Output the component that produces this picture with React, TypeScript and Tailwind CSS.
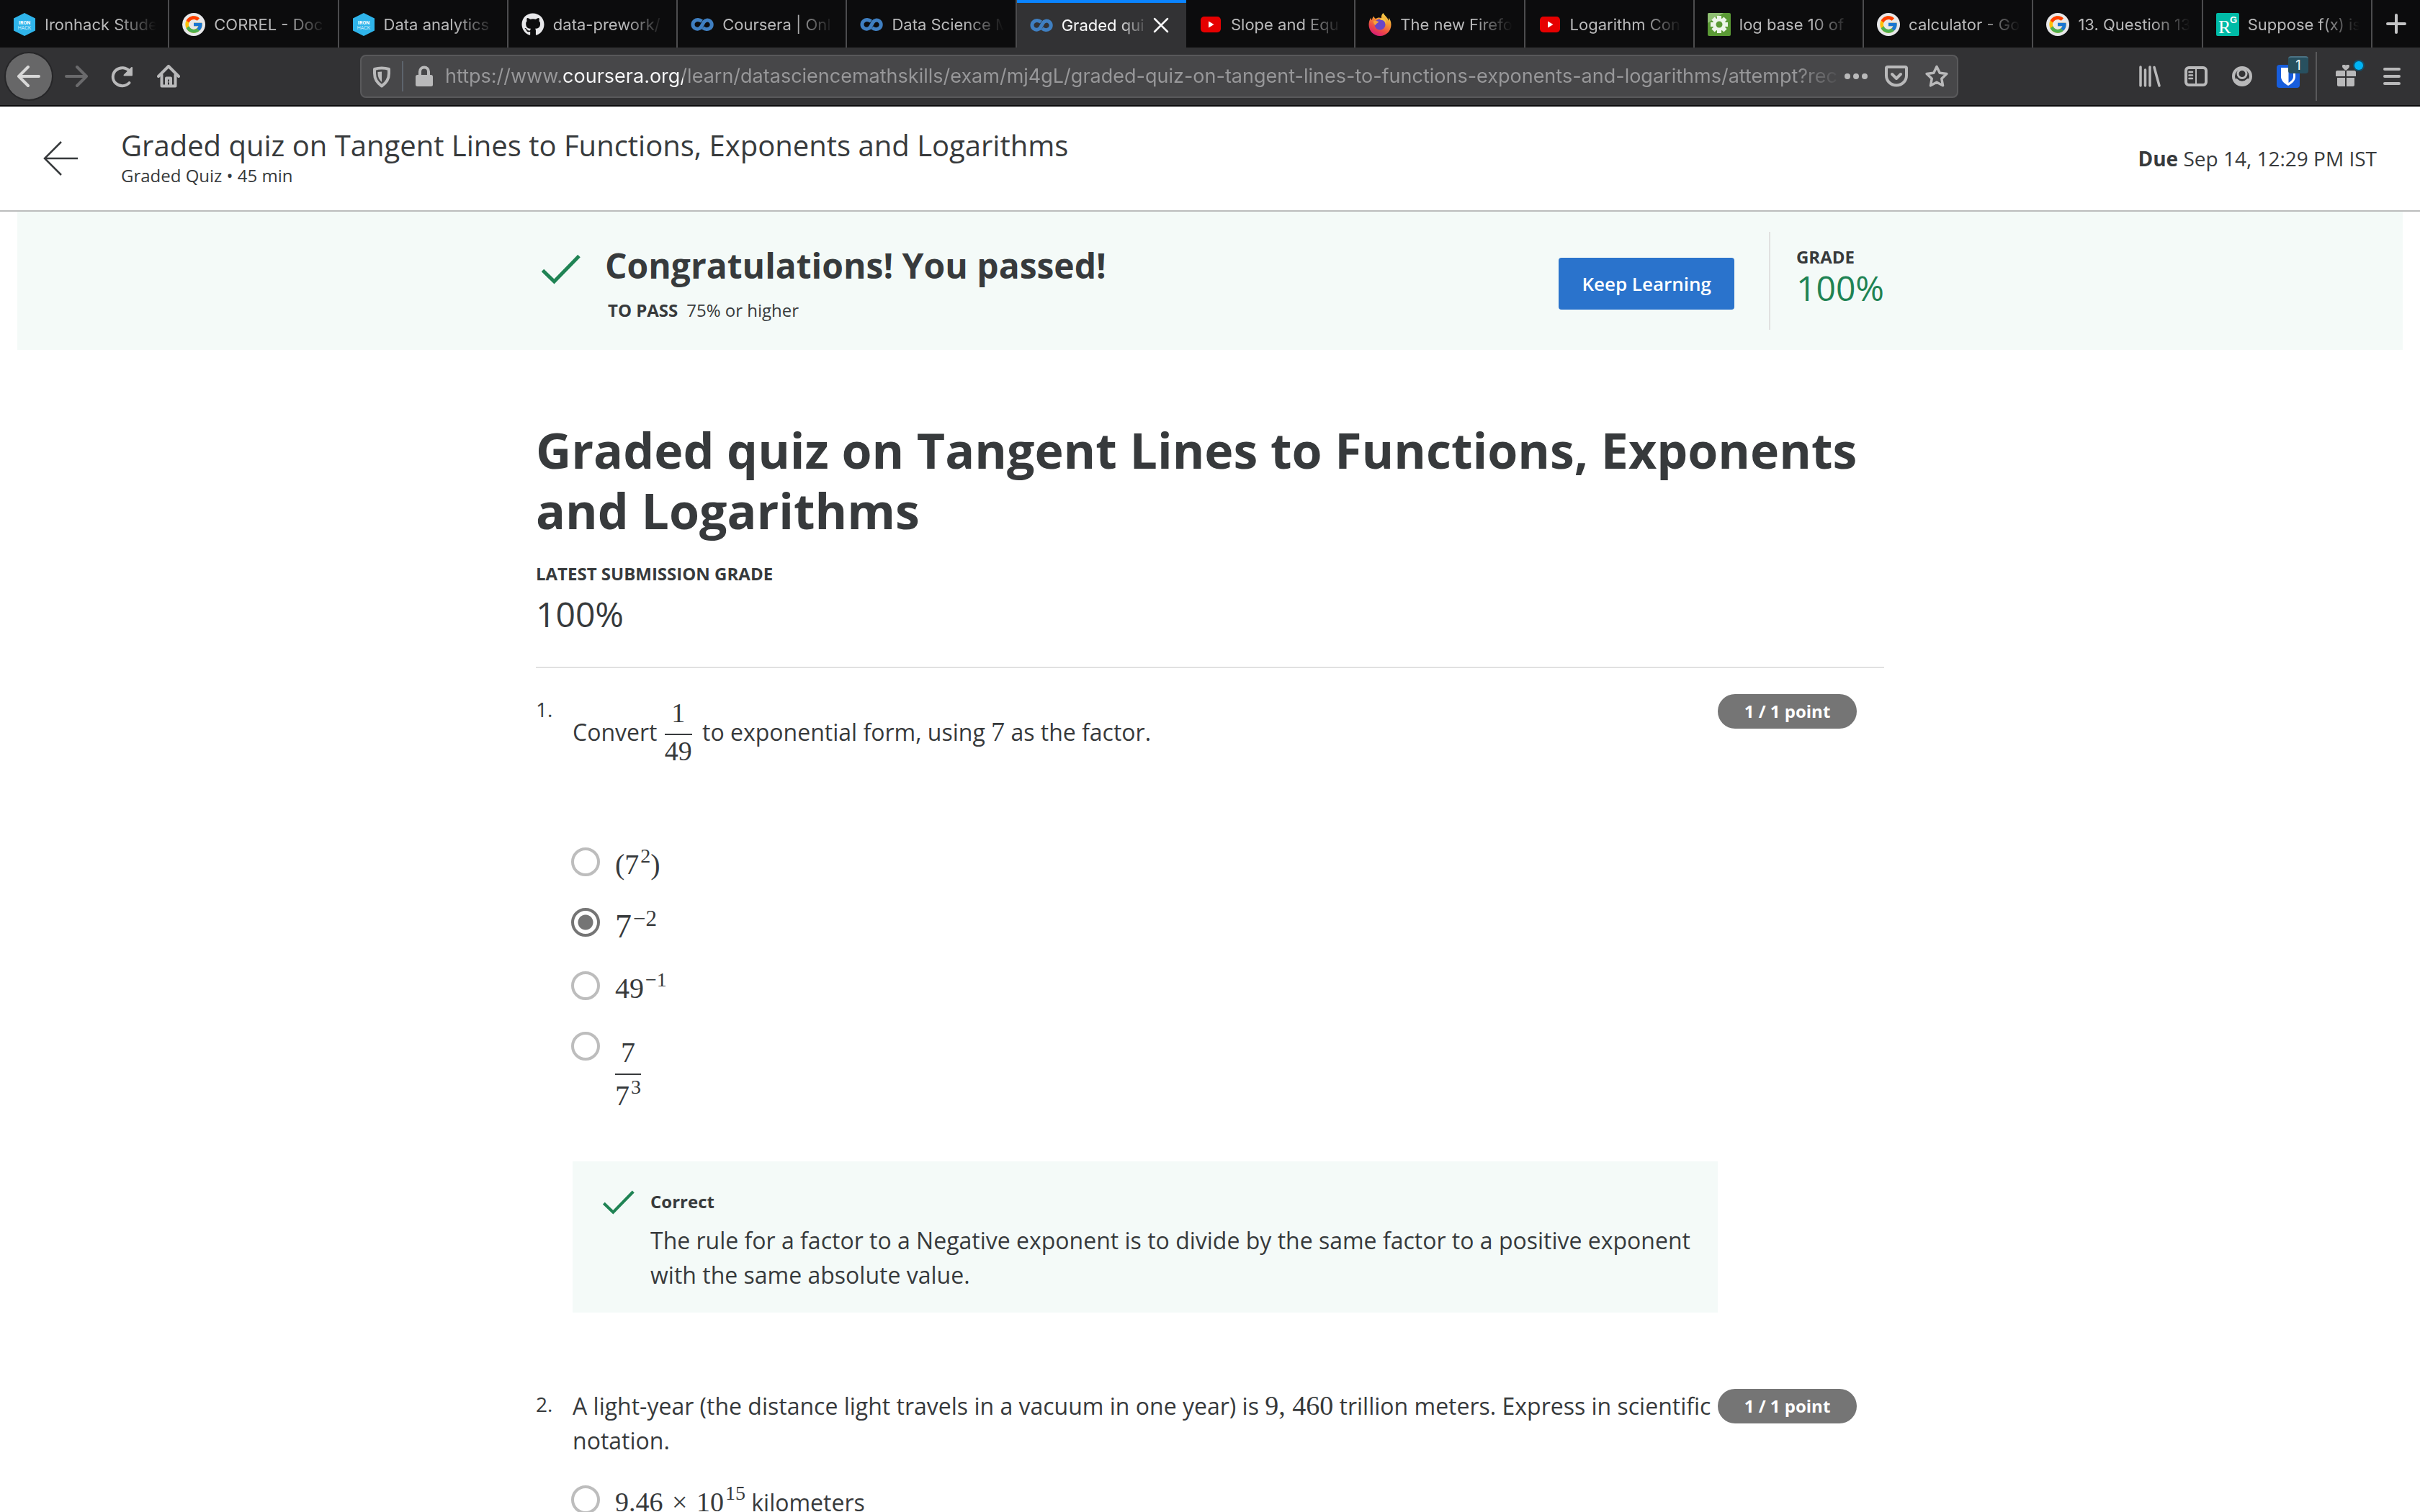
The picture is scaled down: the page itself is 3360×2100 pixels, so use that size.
import React from "react";
import { FcGoogle } from "react-icons/fc";
import { FaGithub } from "react-icons/fa";

/* ---------- favicons ---------- */

function IronhackIcon() {
  return (
    <svg viewBox="0 0 32 32" className="size-8">
      <path d="M16 0 31 7.500v17L16 32 1 24.500v-17z" fill="#2fb4ea" />
      <text x="16" y="15.500" textAnchor="middle" fontSize="7" fontWeight="700" fill="#fff" fontFamily="Roboto, sans-serif">IRON</text>
      <text x="16" y="22.500" textAnchor="middle" fontSize="7" fontWeight="300" fill="#fff" fontFamily="Roboto, sans-serif">HACK</text>
    </svg>
  );
}

function GoogleIcon() {
  return (
    <span className="flex size-8 items-center justify-center rounded-full bg-[#e8e8ea]">
      <FcGoogle className="size-7" />
    </span>
  );
}

function GithubIcon() {
  return <FaGithub className="size-8 text-[#e8e8ea]" />;
}

function CourseraIcon() {
  return (
    <svg viewBox="0 0 32 32" className="size-8" fill="none" stroke="#3f7fc1" strokeWidth="5">
      <path d="M15.500 11.500C12 9 8 9 5.500 11a6.200 6.200 0 0 0 0 10c3 2 7 1.500 9-1.500l3.500-6.500c2-3 6-4 9-1.500a6.200 6.200 0 0 1 0 9.500c-3 2.200-7 2-10-.5" />
    </svg>
  );
}

function YoutubeIcon() {
  return (
    <svg viewBox="0 0 32 32" className="size-8">
      <rect x="2" y="5" width="28" height="22" rx="5" fill="#e60000" />
      <path d="M13 11.500 20.500 16 13 20.500z" fill="#fff" />
    </svg>
  );
}

function FirefoxIcon() {
  return (
    <svg viewBox="0 0 32 32" className="size-8">
      <defs>
        <linearGradient id="ff-body" x1="0.8" y1="0" x2="0.3" y2="1">
          <stop offset="0" stopColor="#f5e04f" />
          <stop offset="0.35" stopColor="#f59a32" />
          <stop offset="0.7" stopColor="#ee4b45" />
          <stop offset="1" stopColor="#d6177c" />
        </linearGradient>
      </defs>
      <path
        d="M20.500 0c-2 2-3 4.500-2.500 7-3-1-6-.5-8 1C8.500 7.200 7.800 6 7.500 4.500 6 6 5 8 5 10 3.800 9 3.500 8 3.400 6.500 1.500 9.500.5 13 .5 16.500.5 25 7.500 32 16 32s15.500-7 15.500-15.500c0-4-1.200-7.500-3.500-10 .4 1.800.3 3-.2 4.200C27 6.500 22.500 4 20.500 0z"
        fill="url(#ff-body)"
      />
      <circle cx="16" cy="16" r="7.500" fill="#6a46c8" />
      <path d="M7 11c3-1 5 .5 7.500 1-1 2-4 2.500-5 5-1-.5-3-3-2.500-6z" fill="#f7a23a" />
      <path d="M15.500 10c5-1 9 2.500 8.500 7 1.500-5-.5-9.500-5-10.500z" fill="#f5c244" />
    </svg>
  );
}

function GearIcon() {
  return (
    <svg viewBox="0 0 32 32" className="size-8">
      <rect width="32" height="32" rx="2" fill="#5b9a35" />
      <path d="M0 2a2 2 0 0 1 2-2h20L0 14z" fill="#8fbf72" />
      <g fill="#eef5ea">
        <rect x="13" y="4" width="6" height="24" />
        <rect x="13" y="4" width="6" height="24" transform="rotate(45 16 16)" />
        <rect x="13" y="4" width="6" height="24" transform="rotate(90 16 16)" />
        <rect x="13" y="4" width="6" height="24" transform="rotate(135 16 16)" />
        <circle cx="16" cy="16" r="9" />
      </g>
      <circle cx="16" cy="16" r="4.500" fill="#5b9a35" />
    </svg>
  );
}

function ResearchGateIcon() {
  return (
    <svg viewBox="0 0 32 32" className="size-8">
      <rect width="32" height="32" rx="2" fill="#00bba7" />
      <text x="3" y="28" fontSize="26" fill="#fff" fontFamily="Liberation Serif, serif">R</text>
      <text x="19" y="14" fontSize="13" fontWeight="700" fill="#fff" fontFamily="Liberation Sans, sans-serif">G</text>
    </svg>
  );
}

const TABS: { label: string; Icon: () => React.JSX.Element; active?: boolean }[] = [
  { label: "Ironhack Stude", Icon: IronhackIcon },
  { label: "CORREL - Doc", Icon: GoogleIcon },
  { label: "Data analytics", Icon: IronhackIcon },
  { label: "data-prework/", Icon: GithubIcon },
  { label: "Coursera | Onl", Icon: CourseraIcon },
  { label: "Data Science M", Icon: CourseraIcon },
  { label: "Graded qui", Icon: CourseraIcon, active: true },
  { label: "Slope and Equ", Icon: YoutubeIcon },
  { label: "The new Firefo", Icon: FirefoxIcon },
  { label: "Logarithm Con", Icon: YoutubeIcon },
  { label: "log base 10 of", Icon: GearIcon },
  { label: "calculator - Go", Icon: GoogleIcon },
  { label: "13. Question 13", Icon: GoogleIcon },
  { label: "Suppose f(x) is", Icon: ResearchGateIcon },
];

function TabStrip() {
  return (
    <nav aria-label="Tabs" className="flex h-[66px] shrink-0 bg-[#0c0c0d] font-[Inter,sans-serif] text-[22px]">
      {TABS.map(({ label, Icon, active }) =>
        active ? (
          <div key={label} className="flex min-w-0 shrink grow basis-48 items-center border-t-4 border-[#0a84ff] bg-[#323234] pl-[18px] text-[#f9f9fa]">
            <button type="button" className="flex min-w-0 flex-1 items-center gap-3">
              <span className="shrink-0"><Icon /></span>
              <span className="min-w-0 flex-1 overflow-hidden text-left whitespace-nowrap [mask-image:linear-gradient(to_right,black_60%,transparent)]">{label}</span>
            </button>
            <button type="button" aria-label="Close tab" className="mr-6 ml-1">
              <svg viewBox="0 0 22 22" className="size-[22px]" fill="none" stroke="#f9f9fa" strokeWidth="2.500" strokeLinecap="round">
                <path d="M2 2l18 18M20 2 2 20" />
              </svg>
            </button>
          </div>
        ) : (
          <button key={label} type="button" className="flex min-w-0 shrink grow basis-48 items-center gap-3 border-r-2 border-[#4c4c4e] pt-0.5 pr-4 pl-[18px] text-[#b9b9ba]">
            <span className="shrink-0"><Icon /></span>
            <span className="min-w-0 flex-1 overflow-hidden text-left whitespace-nowrap [mask-image:linear-gradient(to_right,black_65%,transparent)]">{label}</span>
          </button>
        ),
      )}
      <button type="button" aria-label="New tab" className="flex w-[66px] shrink-0 items-center justify-center">
        <svg viewBox="0 0 28 28" className="size-7" fill="none" stroke="#c4c4c5" strokeWidth="4" strokeLinecap="round">
          <path d="M14 2v24M2 14h24" />
        </svg>
      </button>
    </nav>
  );
}

/* ---------- toolbar ---------- */

function ToolButton({ label, children }: { label: string; children: React.ReactNode }) {
  return (
    <button type="button" aria-label={label} className="flex size-16 shrink-0 items-center justify-center text-[#b9b9ba]">
      <svg viewBox="0 0 32 32" className="size-8" fill="none" stroke="currentColor" strokeWidth="4" strokeLinecap="round" strokeLinejoin="round">
        {children}
      </svg>
    </button>
  );
}

function Toolbar() {
  return (
    <div className="flex h-[82px] shrink-0 items-center border-b-2 border-[#0c0c0d] bg-[#323234] pr-[7px] pl-2 text-[#b9b9ba]">
      <button type="button" aria-label="Back" className="flex size-16 shrink-0 items-center justify-center rounded-full bg-[#676768] text-[#d8d8d8] ring-2 ring-[#262628]">
        <svg viewBox="0 0 32 32" className="size-8" fill="none" stroke="currentColor" strokeWidth="4" strokeLinecap="round" strokeLinejoin="round">
          <path d="M30 16H2M15 3 2 16l13 13" />
        </svg>
      </button>
      <button type="button" aria-label="Forward" disabled className="ml-0.5 flex size-16 items-center justify-center text-[#6a6a6c]">
        <svg viewBox="0 0 32 32" className="size-8" fill="none" stroke="currentColor" strokeWidth="4" strokeLinecap="round" strokeLinejoin="round">
          <path d="M2 16h28M17 3l13 13-13 13" />
        </svg>
      </button>
      <ToolButton label="Reload">
        <path d="M25.500 25A13 12.500 0 1 1 26 9" />
        <path d="M29 4v10.500H18.500z" fill="currentColor" strokeWidth="2" />
      </ToolButton>
      <ToolButton label="Home">
        <path d="M2 16 16 2l14 14" />
        <path d="M6.500 14v15.500h19V14" />
        <path d="M13 28V18.500h6V28" />
        <path d="M17 23v1" strokeWidth="2" />
      </ToolButton>

      <div className="ml-[234px] flex h-[60px] min-w-0 flex-1 items-center rounded-lg border-2 border-[#59595b] bg-[#474749]">
        <button type="button" aria-label="Tracking protection" className="flex w-14 shrink-0 justify-center">
          <svg viewBox="0 0 28 32" className="h-8 w-7" fill="none" stroke="currentColor" strokeWidth="4" strokeLinejoin="round">
            <path d="M14 4.500c3.500 0 7 .5 10 1.500v6c0 7-3.500 13-10 17.500C7.500 25 4 19 4 12V6c3-1 6.500-1.500 10-1.500z" />
            <path d="M14 9.500c-2 0-4 .2-5.500.6V12c0 5 2 9 5.500 12z" fill="currentColor" stroke="none" />
          </svg>
        </button>
        <span className="h-[42px] w-0.5 shrink-0 bg-[#5d646c]" />
        <button type="button" aria-label="Site information" className="flex w-[58px] shrink-0 justify-center">
          <svg viewBox="0 0 24 30" className="h-[30px] w-6">
            <path d="M6 15V8.500a6 6 0 0 1 12 0V15" fill="none" stroke="currentColor" strokeWidth="4" />
            <rect y="13" width="24" height="16" rx="2.500" fill="currentColor" />
          </svg>
        </button>
        <input
          type="text"
          aria-label="Address"
          defaultValue="https://www.coursera.org/learn/datasciencemathskills/exam/mj4gL/graded-quiz-on-tangent-lines-to-functions-exponents-and-logarithms/attempt?rec"
          className="min-w-0 flex-1 bg-[linear-gradient(to_right,#98989a_164px,#f9f9fa_164px,#f9f9fa_330px,#98989a_330px,#98989a_1875px,transparent_1940px)] bg-clip-text font-[Inter,sans-serif] text-[27px] leading-9 text-transparent outline-none"
        />
        <div className="flex w-[160px] shrink-0 items-center justify-end gap-6 pr-3">
          <button type="button" aria-label="Page actions">
            <svg viewBox="0 0 32 32" className="size-8" fill="currentColor">
              <circle cx="4" cy="16" r="4" /><circle cx="16" cy="16" r="4" /><circle cx="28" cy="16" r="4" />
            </svg>
          </button>
          <button type="button" aria-label="Save to Pocket">
            <svg viewBox="0 0 32 32" className="size-8" fill="none" stroke="currentColor" strokeWidth="4" strokeLinecap="round" strokeLinejoin="round">
              <path d="M2 4.500C2 3.500 3 3 4 3h24c1 0 2 .5 2 1.500V15a14 13.500 0 0 1-28 0z" />
              <path d="m10 13 6 6 6-6" />
            </svg>
          </button>
          <button type="button" aria-label="Bookmark this page">
            <svg viewBox="0 0 32 32" className="size-8" fill="none" stroke="currentColor" strokeWidth="3.500" strokeLinejoin="round">
              <path d="m16 2.500 4.200 8.700 9.600 1.300-7 6.700 1.700 9.600-8.500-4.600-8.500 4.600 1.700-9.600-7-6.700 9.600-1.300z" />
            </svg>
          </button>
        </div>
      </div>

      <div className="ml-[234px] flex items-center">
        <ToolButton label="Library">
          <path d="M3 3v26M9.500 7v22M16 3v26M22 3.500 29 29" strokeWidth="3.500" />
        </ToolButton>
        <ToolButton label="Sidebars">
          <rect x="2" y="4" width="28" height="24" rx="4" />
          <path d="M16 5v22" strokeWidth="2" />
          <path d="M6.500 10H11M6.500 14.500H11M6.500 19H11" strokeWidth="2.500" />
        </ToolButton>
        <ToolButton label="Account">
          <circle cx="16" cy="16" r="12" />
          <circle cx="16" cy="12.500" r="6" strokeWidth="3" />
          <path d="M8 21c4.500 5 11.500 5 16 0" strokeWidth="4" />
        </ToolButton>
        <button type="button" aria-label="Password manager, 1 login" className="relative flex size-16 items-center justify-center">
          <svg viewBox="0 0 32 32" className="size-8">
            <rect width="32" height="32" rx="4" fill="#175ddc" />
            <path d="M6 4h20v12c0 6-4 9.500-10 13C10 25.500 6 22 6 16z" fill="#fff" />
            <path d="M16.500 7H23v9c0 4-2.500 6.500-6.500 9z" fill="#175ddc" />
          </svg>
          <span className="absolute top-1 right-1 flex h-6 w-7 items-center justify-center rounded-sm border-t-2 border-[#4c7384] bg-[#28505f] font-[Inter,sans-serif] text-[18px] leading-none text-white">1</span>
        </button>
      </div>
      <span className="ml-1.5 h-[68px] w-0.5 shrink-0 bg-[#59595b]" />
      <button type="button" aria-label="What's new" className="relative ml-2 flex size-16 items-center justify-center">
        <svg viewBox="0 0 32 32" className="size-8" fill="currentColor">
          <path d="M16 8C12 5 11 3.500 11 2a2.500 2.500 0 0 1 5 0 2.500 2.500 0 0 1 5 0c0 1.500-1 3-5 6z" />
          <path d="M4 8h11v8H2v-6c0-1 1-2 2-2zM17 8h11c1 0 2 1 2 2v6H17zM4 18h11v12H6c-1 0-2-1-2-2zM17 18h11v10c0 1-1 2-2 2h-9z" />
        </svg>
        <span className="absolute top-[11px] right-2 size-3 rounded-full bg-[#00b3f4] ring-2 ring-[#12506b]" />
      </button>
      <ToolButton label="Menu">
        <path d="M6 6h20M6 16h20M6 26h20" />
      </ToolButton>
    </div>
  );
}

/* ---------- page ---------- */

function Check({ className }: { className: string }) {
  return (
    <svg viewBox="0 0 54 42" className={className} fill="none" stroke="#1f8354" strokeWidth="5">
      <path d="M1.500 22.500 17.500 38 52 2.500" />
    </svg>
  );
}

function M({ children, className = "text-[38px] leading-none" }: { children: React.ReactNode; className?: string }) {
  return <span className={`font-[Liberation_Serif,serif] whitespace-nowrap ${className}`}>{children}</span>;
}

function Sup({ children, className = "text-[28px]" }: { children: React.ReactNode; className?: string }) {
  return <sup className={`static ml-0.5 align-[16px] leading-[0px] ${className}`}>{children}</sup>;
}

function PointBadge() {
  return (
    <span className="mr-[38px] flex h-12 w-[193px] shrink-0 items-center justify-center rounded-full bg-[#757575] text-2xl font-bold text-white">
      1 / 1 point
    </span>
  );
}

function Option({ name, checked, children }: { name: string; checked?: boolean; children: React.ReactNode }) {
  return (
    <label className="flex items-start gap-[21px]">
      <input
        type="radio"
        name={name}
        defaultChecked={checked}
        className="size-10 shrink-0 appearance-none rounded-full border-4 border-[#bdbdbd] bg-white checked:border-[#757575] checked:bg-[radial-gradient(circle,#757575_10px,white_11px)]"
      />
      {children}
    </label>
  );
}

function Question({ number, prompt, children }: { number: string; prompt: React.ReactNode; children: React.ReactNode }) {
  return (
    <section className="flex items-start">
      <span className="w-[51px] shrink-0 pt-[3px] text-[28px] leading-9">{number}</span>
      <div className="min-w-0 flex-1">
        <p>{prompt}</p>
        {children}
      </div>
      <PointBadge />
    </section>
  );
}

export default function App() {
  return (
    <div className="flex h-screen flex-col overflow-hidden bg-white font-[Open_Sans,sans-serif] text-[32px] leading-[48px] text-[#373a3c]">
      <TabStrip />
      <Toolbar />

      <header className="flex shrink-0 items-center border-b-2 border-[#bbbdbd] px-[60px] py-[30px]">
        <a href="#back" aria-label="Back to course" className="mr-[58px]">
          <svg viewBox="0 0 48 48" className="size-12" fill="none" stroke="#373a3c" strokeWidth="2.500">
            <path d="M48 24H2M25 1 2 24l23 23" />
          </svg>
        </a>
        <div className="flex-1 pl-0.5">
          <p className="text-[40px] leading-[48px]">Graded quiz on Tangent Lines to Functions, Exponents and Logarithms</p>
          <p className="text-2xl leading-9">Graded Quiz • 45 min</p>
        </div>
        <p className="text-[28px]"><b>Due</b> Sep 14, 12:29 PM IST</p>
      </header>

      <section className="mx-6 shrink-0 bg-[#f4faf8]">
        <div className="mx-auto flex w-full max-w-[1872px] items-start py-7">
          <Check className="mt-[31px] mr-[34px] ml-2 h-[42px] w-[54px]" />
          <div className="flex-1 pt-[15px] pb-[9px]">
            <h2 className="text-5xl leading-[64px] font-bold">Congratulations! You passed!</h2>
            <p className="mt-3 pl-1 text-2xl leading-9"><b className="mr-3">TO PASS</b>75% or higher</p>
          </div>
          <button type="button" className="mt-9 mr-12 h-[72px] rounded-sm bg-[#2a73cc] px-8 text-[26px] font-semibold text-white">
            Keep Learning
          </button>
          <div className="self-stretch border-l-2 border-[#e1e1e1] pt-[17px] pl-9">
            <h3 className="text-2xl leading-9 font-bold">GRADE</h3>
            <p className="text-5xl leading-[50px] text-[#1f8354]">100%</p>
          </div>
        </div>
      </section>

      <main className="mx-auto mt-[97px] w-full max-w-[1872px]">
        <h1 className="text-[68px] leading-[84px] font-bold">
          Graded quiz on Tangent Lines to Functions, Exponents and Logarithms
        </h1>
        <h2 className="mt-7 text-2xl leading-9 font-bold">LATEST SUBMISSION GRADE</h2>
        <p className="mt-1.5 text-5xl leading-[64px]">100%</p>
        <hr className="mt-[41px] mb-9 border-t-2 border-[#e1e1e1]" />

        <Question
          number="1."
          prompt={
            <>
              Convert{" "}
              <span className="my-[7px] mr-1.5 ml-0.5 inline-flex flex-col items-center align-middle font-[Liberation_Serif,serif] text-[38px] leading-[38px]">
                <span className="pb-2.5">1</span>
                <span className="border-t-2 border-[#373a3c] pt-[3px] pb-[7px]">49</span>
              </span>{" "}
              to exponential form, using <M>7</M> as the factor.
            </>
          }
        >
          <div className="mt-[101px] -ml-0.5 flex flex-col gap-9">
            <Option name="q1">
              <M className="text-[40px] leading-[48px]">(7<Sup>2</Sup>)</M>
            </Option>
            <Option name="q1" checked>
              <M className="text-[46px] leading-[52px]">7<Sup className="text-[31px]">−2</Sup></M>
            </Option>
            <Option name="q1">
              <M className="text-[40px] leading-[48px]">49<Sup>−1</Sup></M>
            </Option>
            <Option name="q1">
              <span className="mt-2.5 flex flex-col font-[Liberation_Serif,serif] text-[40px] leading-[38px]">
                <span className="pb-2.5 text-center">7</span>
                <span className="border-t-2 border-[#373a3c] pt-2.5">7<Sup>3</Sup></span>
              </span>
            </Option>
          </div>
          <div className="mt-[72px] flex items-start bg-[#f4faf8] pt-[38px] pr-6 pb-7 pl-[42px]">
            <Check className="mt-0.5 mr-[22px] h-[34px] w-11 shrink-0" />
            <div>
              <h3 className="text-2xl leading-9 font-bold">Correct</h3>
              <p className="mt-3">
                The rule for a factor to a Negative exponent is to divide by the same factor to a positive exponent with
                the same absolute value.
              </p>
            </div>
          </div>
        </Question>

        <div className="mt-[106px]">
          <Question
            number="2."
            prompt={
              <>
                A light-year (the distance light travels in a vacuum in one year) is <M>9, 460</M> trillion meters.
                Express in scientific notation.
              </>
            }
          >
            <div className="mt-[38px] -ml-0.5 flex flex-col gap-9">
              <Option name="q2">
                <span><M>9.46 <span className="mx-[3px]">×</span> 10<Sup>15</Sup></M> kilometers</span>
              </Option>
            </div>
          </Question>
        </div>
      </main>
    </div>
  );
}
